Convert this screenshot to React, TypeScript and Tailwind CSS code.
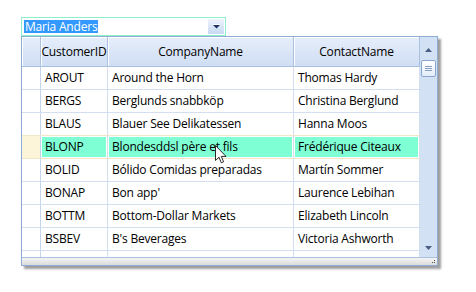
const rows = [
  ["AROUT", "Around the Horn", "Thomas Hardy"],
  ["BERGS", "Berglunds snabbköp", "Christina Berglund"],
  ["BLAUS", "Blauer See Delikatessen", "Hanna Moos"],
  ["BLONP", "Blondesddsl père et fils", "Frédérique Citeaux"],
  ["BOLID", "Bólido Comidas preparadas", "Martín Sommer"],
  ["BONAP", "Bon app'", "Laurence Lebihan"],
  ["BOTTM", "Bottom-Dollar Markets", "Elizabeth Lincoln"],
  ["BSBEV", "B's Beverages", "Victoria Ashworth"],
  ["", "", ""],
]

const SELECTED = 3

function HeaderCell({ w, children }: { w: string; children?: React.ReactNode }) {
  return (
    <div
      className={`${w} h-full shrink-0 flex items-center justify-center border-r border-[#a9c0df]
        bg-gradient-to-b from-[#e6eefb] to-[#cfdef4] shadow-[inset_1px_1px_0_#ffffff]`}
    >
      {children}
    </div>
  )
}

function Cell({ w, sel, children }: { w: string; sel: boolean; children: React.ReactNode }) {
  return (
    <div className={`${w} h-full shrink-0 border-r border-[#d3dff0] p-px`}>
      <div className={`h-full flex items-center pl-[3px] whitespace-nowrap overflow-hidden ${sel ? "bg-[#7fffd4]" : ""}`}>
        {children}
      </div>
    </div>
  )
}

export default function App() {
  return (
    <div className="w-[476px] h-[292px] bg-white relative overflow-hidden font-['Segoe_UI','Open_Sans',sans-serif] text-[12px] tracking-[-0.2px] text-black">
      <div className="pt-[17px] pl-[21px]">
        {/* combo */}
        <div className="w-[205px] h-[19px] border border-[#8eefcd] flex items-center justify-between pl-[2px] pr-px">
          <span className="bg-[#3399ff] text-white leading-[13px] h-[13px] px-px">Maria Anders</span>
          <div className="w-[16px] h-[15px] flex items-center justify-center bg-gradient-to-b from-[#eef3fc] to-[#c8daf4]">
            <svg width="7" height="5" viewBox="0 0 7 5">
              <rect x="0" y="0" width="7" height="1" fill="#ffffff" />
              <path d="M0 1 H7 L3.5 4.5 Z" fill="#1b3560" />
            </svg>
          </div>
        </div>

        {/* grid popup */}
        <div className="w-[417px] h-[230px] border border-[#91acd2] flex flex-col bg-white shadow-[3px_3px_2px_rgba(0,0,0,0.38)]">
          <div className="flex flex-1 min-h-0">
            <div className="w-[398px] flex flex-col overflow-hidden">
              <div className="h-[30px] flex border-b border-[#a9c0df] shrink-0">
                <HeaderCell w="w-[19px]" />
                <HeaderCell w="w-[67px]">CustomerID</HeaderCell>
                <HeaderCell w="w-[186px]">CompanyName</HeaderCell>
                <HeaderCell w="w-[126px]">ContactName</HeaderCell>
              </div>
              {rows.map((r, i) => {
                const sel = i === SELECTED
                const lineCls = sel || i === SELECTED - 1 ? "border-[#f1e6c6]" : "border-[#d3dff0]"
                return (
                  <div key={i} className={`h-[23px] shrink-0 flex border-b ${lineCls}`}>
                    <div className={`w-[19px] h-full shrink-0 border-r border-[#c5d5ec] ${sel ? "bg-[#fcf5da]" : ""}`} />
                    <Cell w="w-[67px]" sel={sel}>{r[0]}</Cell>
                    <Cell w="w-[186px]" sel={sel}>{r[1]}</Cell>
                    <Cell w="w-[126px]" sel={sel}>{r[2]}</Cell>
                  </div>
                )
              })}
            </div>

            {/* scrollbar */}
            <div className="w-[17px] flex flex-col items-center bg-[#d3e1f4]">
              <div className="h-[23px] w-full flex items-center justify-center pt-[2px]">
                <svg width="7" height="4" viewBox="0 0 7 4">
                  <path d="M3.5 0 L7 4 H0 Z" fill="#4a5f84" />
                </svg>
              </div>
              <div className="w-[15px] h-[17px] rounded-[2px] border border-[#8aa6cc] bg-gradient-to-b from-[#ffffff] to-[#e3ecf9] flex flex-col items-center justify-center gap-px">
                <div className="w-[7px] h-px bg-[#8aa0c0]" />
                <div className="w-[7px] h-px bg-[#8aa0c0]" />
                <div className="w-[7px] h-px bg-[#8aa0c0]" />
              </div>
              <div className="flex-1" />
              <div className="h-[14px] w-full flex items-center justify-center pb-[4px]">
                <svg width="7" height="4" viewBox="0 0 7 4">
                  <path d="M0 0 H7 L3.5 4 Z" fill="#4a5f84" />
                </svg>
              </div>
            </div>
          </div>

          {/* footer */}
          <div className="h-[8px] shrink-0 border-t border-[#a9c0df] bg-gradient-to-b from-[#f4f4f4] to-[#dcdcdc] flex justify-end items-end pr-[1px] pb-px">
            <svg width="4" height="4" viewBox="0 0 4 4">
              <rect x="2" y="0" width="1" height="1" fill="#555" />
              <rect x="0" y="2" width="1" height="1" fill="#555" />
              <rect x="2" y="2" width="1" height="1" fill="#555" />
            </svg>
          </div>
        </div>
      </div>

      {/* mouse pointer */}
      <svg className="absolute left-[215px] top-[145px]" width="13" height="20" viewBox="0 0 13 20">
        <path
          d="M0.5 0.5 L0.5 15.5 L4 12.2 L6.3 17.8 L8.6 16.8 L6.3 11.4 L11 11.4 Z"
          fill="#ffffff"
          stroke="#2a2a2a"
          strokeWidth="1"
          strokeLinejoin="round"
        />
      </svg>
    </div>
  )
}
